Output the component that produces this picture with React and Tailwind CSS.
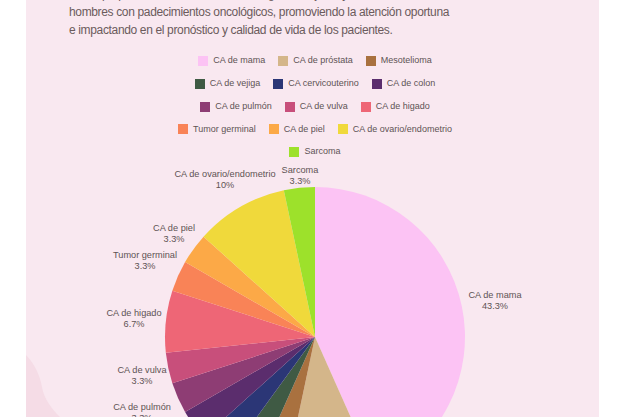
import React from "react";

const slices = [
  { name: "CA de mama", value: 13, color: "#fcc3f4" },
  { name: "CA de próstata", value: 3, color: "#d4b68a" },
  { name: "Mesotelioma", value: 1, color: "#a9713f" },
  { name: "CA de vejiga", value: 1, color: "#3f5a44" },
  { name: "CA cervicouterino", value: 1, color: "#2b3676" },
  { name: "CA de colon", value: 1, color: "#5b2d6d" },
  { name: "CA de pulmón", value: 1, color: "#8e3d74" },
  { name: "CA de vulva", value: 1, color: "#c84f7b" },
  { name: "CA de higado", value: 2, color: "#ee6676" },
  { name: "Tumor germinal", value: 1, color: "#f98357" },
  { name: "CA de piel", value: 1, color: "#fca947" },
  { name: "CA de ovario/endometrio", value: 3, color: "#f0d93b" },
  { name: "Sarcoma", value: 1, color: "#9de12b" },
];

const legendRows = [
  [0, 1, 2],
  [3, 4, 5],
  [6, 7, 8],
  [9, 10, 11],
  [12],
];

// label anchors inside the chart svg
const labels = [
  { text: "Sarcoma", pct: "3.3%", x: 274, y: 8 },
  { text: "CA de ovario/endometrio", pct: "10%", x: 199, y: 12 },
  { text: "CA de piel", pct: "3.3%", x: 148, y: 66 },
  { text: "Tumor germinal", pct: "3.3%", x: 119, y: 93 },
  { text: "CA de higado", pct: "6.7%", x: 108, y: 151 },
  { text: "CA de vulva", pct: "3.3%", x: 116, y: 208 },
  { text: "CA de pulmón", pct: "3.3%", x: 116, y: 245 },
  { text: "CA de mama", pct: "43.3%", x: 469, y: 133 },
];

function PieChart() {
  const cx = 289;
  const cy = 172;
  const r = 150;
  const total = slices.reduce((s, d) => s + d.value, 0);
  let acc = 0;

  const point = (a) => {
    const rad = (a - 90) * (Math.PI / 180);
    return [cx + r * Math.cos(rad), cy + r * Math.sin(rad)];
  };

  return (
    <svg width="568" height="260" className="block mt-[6px]">
      {slices.map((s) => {
        const start = (acc / total) * 360;
        acc += s.value;
        const end = (acc / total) * 360;
        const [x1, y1] = point(start);
        const [x2, y2] = point(end);
        const large = end - start > 180 ? 1 : 0;
        return (
          <path
            key={s.name}
            d={`M${cx} ${cy} L${x1} ${y1} A${r} ${r} 0 ${large} 1 ${x2} ${y2} Z`}
            fill={s.color}
          />
        );
      })}
      {labels.map((l) => (
        <text
          key={l.text}
          x={l.x}
          y={l.y}
          textAnchor="middle"
          fontSize="9.2"
          fill="#5e5354"
          fontFamily="'Liberation Sans', Arial, sans-serif"
        >
          <tspan x={l.x}>{l.text}</tspan>
          <tspan x={l.x} dy="11">{l.pct}</tspan>
        </text>
      ))}
    </svg>
  );
}

export default function App() {
  return (
    <div className="w-[628px] h-[417px] overflow-hidden bg-white">
      <div className="relative ml-[26px] w-[573px] h-full bg-[#f9e8f0] overflow-hidden">
        <svg className="absolute left-0 bottom-0" width="40" height="62">
          <path d="M0 0 C8 8 14 20 16 32 C18 44 26 54 34 62 L0 62 Z" fill="#f5dce6" />
        </svg>

        <div className="relative">
          <p
            className="-mt-[15px] pl-[43px] text-[12px] leading-[18px] tracking-[-0.35px] text-[#6b5b5c] whitespace-nowrap"
            style={{ fontFamily: "'Liberation Sans', Arial, sans-serif" }}
          >
            con el propósito de brindar atención integral a mujeres y
            <br />
            hombres con padecimientos oncológicos, promoviendo la atención oportuna
            <br />
            e impactando en el pronóstico y calidad de vida de los pacientes.
          </p>

          <div className="pl-[5px] mt-[15px] flex flex-col gap-[8.75px] font-['Liberation_Sans',Arial,sans-serif] text-[9px] text-[#5e5354]">
            {legendRows.map((row, i) => (
              <div key={i} className="h-[14px] flex justify-center items-center gap-x-[13px]">
                {row.map((idx) => (
                  <div key={idx} className="flex items-center gap-[5px]">
                    <span
                      className="w-[10px] h-[10px] block"
                      style={{ backgroundColor: slices[idx].color }}
                    />
                    <span>{slices[idx].name}</span>
                  </div>
                ))}
              </div>
            ))}
          </div>

          <PieChart />
        </div>
      </div>
    </div>
  );
}
